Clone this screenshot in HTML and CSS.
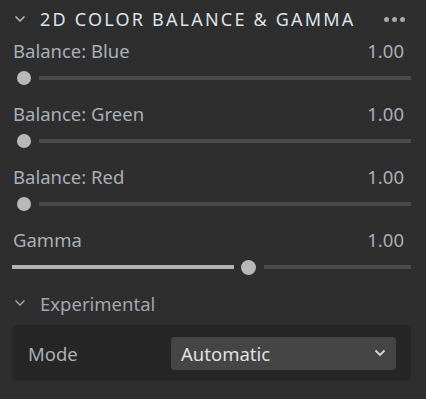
FILE: index.html
```html
<!DOCTYPE html>
<html lang="en">
<head>
    <meta charset="UTF-8">
    <title>2D Color Balance &amp; Gamma</title>
    <link rel="stylesheet" href="styles.css">
</head>
<body>
    <div class="panel">
        <div class="header">
            <svg class="chev" width="12" height="8" viewBox="0 0 12 8"><path d="M1.5 1.5 L6 6 L10.5 1.5" fill="none" stroke="#b8c2cc" stroke-width="1.5"/></svg>
            <span class="title">2D COLOR BALANCE &amp; GAMMA</span>
            <span class="dots"><i></i><i></i><i></i></span>
        </div>

        <div class="param">
            <div class="label-row"><span>Balance: Blue</span><span>1.00</span></div>
            <div class="slider">
                <span class="knob"></span>
                <span class="track"></span>
            </div>
        </div>

        <div class="param">
            <div class="label-row"><span>Balance: Green</span><span>1.00</span></div>
            <div class="slider">
                <span class="knob"></span>
                <span class="track"></span>
            </div>
        </div>

        <div class="param">
            <div class="label-row"><span>Balance: Red</span><span>1.00</span></div>
            <div class="slider">
                <span class="knob"></span>
                <span class="track"></span>
            </div>
        </div>

        <div class="param">
            <div class="label-row"><span>Gamma</span><span>1.00</span></div>
            <div class="slider">
                <span class="fill"></span>
                <span class="knob"></span>
                <span class="track"></span>
            </div>
        </div>

        <div class="sub-header">
            <svg class="chev" width="12" height="8" viewBox="0 0 12 8"><path d="M1.5 1.5 L6 6 L10.5 1.5" fill="none" stroke="#a0a8b0" stroke-width="1.5"/></svg>
            <span>Experimental</span>
        </div>

        <div class="box">
            <span class="box-label">Mode</span>
            <div class="select">
                <span>Automatic</span>
                <svg width="12" height="8" viewBox="0 0 12 8"><path d="M1.5 1.5 L6 6 L10.5 1.5" fill="none" stroke="#d8d8d8" stroke-width="1.8"/></svg>
            </div>
        </div>
    </div>
</body>
</html>
```

FILE: styles.css
```css
body {
    margin: 0;
    background: #2e2e2e;
    font-family: "Noto Sans", sans-serif;
    color: #a8b0b8;
}
.panel {
    width: 426px;
    height: 399px;
    padding: 0 15px 0 12px;
    box-sizing: border-box;
}
.header {
    display: flex;
    align-items: center;
    height: 38px;
}
.chev {
    margin-left: 2px;
    margin-right: 14px;
}
.title {
    flex-grow: 1;
    font-size: 18px;
    letter-spacing: 2.2px;
    color: #dce3ea;
}
.dots {
    display: flex;
    gap: 3px;
    margin-right: 6px;
}
.dots i {
    width: 5px;
    height: 5px;
    border-radius: 50%;
    background: #a8acb0;
}
.param {
    height: 63px;
}
.label-row {
    display: flex;
    justify-content: space-between;
    font-size: 18.5px;
    line-height: 26px;
    padding-left: 1px;
    margin-right: 7px;
}
.slider {
    display: flex;
    align-items: center;
    height: 28px;
}
.knob {
    width: 14px;
    height: 14px;
    border-radius: 50%;
    background: #b8b8b8;
    margin-left: 5px;
    flex-shrink: 0;
}
.track {
    flex-grow: 1;
    height: 4px;
    background: #4a4a4a;
    margin-left: 8px;
}
.fill {
    width: 222px;
    height: 4px;
    background: #b2b2b2;
    margin-right: 7px;
}
.fill + .knob {
    width: 15px;
    height: 15px;
    margin-left: 0;
}
.sub-header {
    display: flex;
    align-items: center;
    height: 26px;
    font-size: 18.5px;
    color: #a0a8b0;
}
.box {
    display: flex;
    align-items: center;
    justify-content: space-between;
    margin-top: 9px;
    height: 56px;
    background: #262626;
    border-radius: 6px;
    padding: 0 15px 0 16px;
}
.box-label {
    font-size: 18.5px;
    color: #a8b0b8;
}
.select {
    display: flex;
    align-items: center;
    justify-content: space-between;
    width: 225px;
    height: 33px;
    box-sizing: border-box;
    background: #454545;
    border-radius: 4px;
    padding: 0 10px;
    font-size: 18.5px;
    color: #e0e0e0;
}
```
